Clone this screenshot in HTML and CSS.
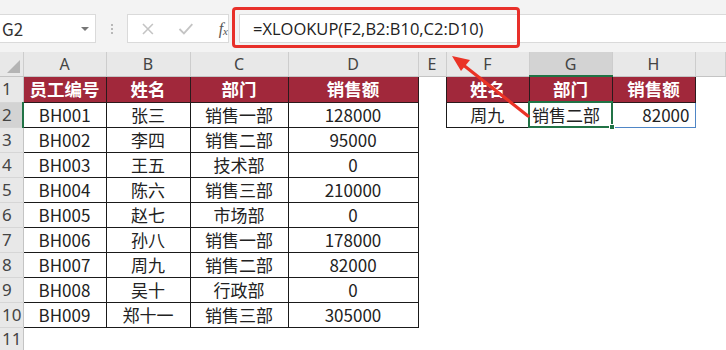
FILE: index.html
```html
<!DOCTYPE html>
<html lang="zh-CN">
<head>
  <meta charset="UTF-8" />
  <title>XLOOKUP</title>
  <link rel="stylesheet" href="styles.css">
</head>
<body>
  <div class="toolbar">
    <div class="namebox">
      <span>G2</span>
      <span class="caret"></span>
    </div>
    <div class="grip">
      <i></i><i></i><i></i>
    </div>
    <div class="fxbox">
      <svg class="ico" width="14" height="14" viewBox="0 0 14 14"><path d="M2 2 L12 12 M12 2 L2 12" stroke="#c4c4c4" stroke-width="1.6" fill="none"/></svg>
      <svg class="ico" width="16" height="14" viewBox="0 0 16 14"><path d="M1.5 7 L6 11.5 L14.5 2" stroke="#c4c4c4" stroke-width="1.8" fill="none"/></svg>
      <span class="fx">f<sub>x</sub></span>
    </div>
    <div class="formula">=XLOOKUP(F2,B2:B10,C2:D10)</div>
  </div>

  <table class="sheet">
    <colgroup>
      <col style="width:23px"><col style="width:83px"><col style="width:84px"><col style="width:98px">
      <col style="width:130px"><col style="width:28px"><col style="width:83px"><col style="width:83px">
      <col style="width:83px"><col>
    </colgroup>
    <tr class="colhead">
      <th class="corner"><span class="tri"></span></th>
      <th>A</th><th>B</th><th>C</th><th>D</th><th>E</th><th>F</th><th class="sel">G</th><th>H</th><th></th>
    </tr>
    <tr class="r1">
      <th class="rowhead">1</th>
      <td class="hd">员工编号</td><td class="hd">姓名</td><td class="hd">部门</td><td class="hd">销售额</td>
      <td></td>
      <td class="hd">姓名</td><td class="hd">部门</td><td class="hd">销售额</td><td></td>
    </tr>
    <tr>
      <th class="rowhead cur">2</th>
      <td class="c">BH001</td><td class="c">张三</td><td class="c">销售一部</td><td class="c">128000</td>
      <td></td>
      <td class="c">周九</td><td class="c active">销售二部<span class="handle"></span></td><td class="c num spill">82000</td><td></td>
    </tr>
    <tr>
      <th class="rowhead">3</th>
      <td class="c">BH002</td><td class="c">李四</td><td class="c">销售二部</td><td class="c">95000</td><td colspan="5"></td>
    </tr>
    <tr>
      <th class="rowhead">4</th>
      <td class="c">BH003</td><td class="c">王五</td><td class="c">技术部</td><td class="c">0</td><td colspan="5"></td>
    </tr>
    <tr>
      <th class="rowhead">5</th>
      <td class="c">BH004</td><td class="c">陈六</td><td class="c">销售三部</td><td class="c">210000</td><td colspan="5"></td>
    </tr>
    <tr>
      <th class="rowhead">6</th>
      <td class="c">BH005</td><td class="c">赵七</td><td class="c">市场部</td><td class="c">0</td><td colspan="5"></td>
    </tr>
    <tr>
      <th class="rowhead">7</th>
      <td class="c">BH006</td><td class="c">孙八</td><td class="c">销售一部</td><td class="c">178000</td><td colspan="5"></td>
    </tr>
    <tr>
      <th class="rowhead">8</th>
      <td class="c">BH007</td><td class="c">周九</td><td class="c">销售二部</td><td class="c">82000</td><td colspan="5"></td>
    </tr>
    <tr>
      <th class="rowhead">9</th>
      <td class="c">BH008</td><td class="c">吴十</td><td class="c">行政部</td><td class="c">0</td><td colspan="5"></td>
    </tr>
    <tr>
      <th class="rowhead">10</th>
      <td class="c">BH009</td><td class="c">郑十一</td><td class="c">销售三部</td><td class="c">305000</td><td colspan="5"></td>
    </tr>
    <tr class="last">
      <th class="rowhead">11</th>
      <td colspan="9"></td>
    </tr>
  </table>

  <!-- annotation: red box around the formula and arrow pointing at it -->
  <div class="mark"></div>
  <svg class="arrow" width="726" height="350" viewBox="0 0 726 350">
    <line x1="528" y1="116" x2="462" y2="64" stroke="#ea3326" stroke-width="3.2" stroke-linecap="round"/>
    <polygon points="452,56 470,60 461,71" fill="#ea3326"/>
  </svg>
</body>
</html>
```

FILE: styles.css
```css
* {
  box-sizing: border-box;
}
body {
  margin: 0;
  width: 726px;
  height: 350px;
  overflow: hidden;
  position: relative;
  background: #fff;
  font-family: "Noto Sans CJK SC", "Noto Sans", sans-serif;
  color: #222;
}

/* formula bar */
.toolbar {
  height: 52px;
  background: #f3f3f3;
  display: flex;
  align-items: flex-start;
  padding-top: 14px;
}
.namebox {
  width: 96px;
  height: 29px;
  background: #fff;
  border: 1px solid #dadada;
  border-left: none;
  display: flex;
  align-items: center;
  justify-content: space-between;
  padding: 0 6px 0 2px;
  font-size: 17px;
  color: #333;
}
.caret {
  width: 0;
  height: 0;
  border-left: 4px solid transparent;
  border-right: 4px solid transparent;
  border-top: 4px solid #777;
}
.grip {
  width: 31px;
  height: 29px;
  display: flex;
  flex-direction: column;
  align-items: center;
  justify-content: center;
  gap: 2px;
}
.grip i {
  width: 2px;
  height: 2px;
  background: #b8b8b8;
}
.fxbox {
  width: 102px;
  height: 29px;
  background: #fff;
  border: 1px solid #dadada;
  display: flex;
  align-items: center;
  padding-left: 13px;
}
.fxbox .ico {
  margin-right: 23px;
}
.fxbox .ico + .ico {
  margin-right: 25px;
}
.fx {
  font-family: "Liberation Serif", serif;
  font-style: italic;
  font-size: 16px;
  color: #555;
}
.fx sub {
  font-size: 11px;
  vertical-align: -1px;
}
.formula {
  flex: 1;
  margin-left: 10px;
  height: 29px;
  background: #fff;
  border: 1px solid #dadada;
  border-right: none;
  padding-left: 13px;
  font-family: "Open Sans", sans-serif;
  font-size: 16.5px;
  line-height: 27px;
  color: #222;
}

/* grid */
.sheet {
  border-collapse: collapse;
  table-layout: fixed;
  width: 726px;
}
.sheet th,
.sheet td {
  padding: 0;
  height: 25px;
  line-height: 22px;
  font-size: 17px;
  white-space: nowrap;
  overflow: visible;
}
.colhead th {
  height: 24px;
  background: #e8e8e8;
  border-right: 1px solid #cdcdcd;
  border-bottom: 1px solid #c4c4c4;
  font-family: "Noto Sans", sans-serif;
  font-weight: normal;
  font-size: 16px;
  color: #444;
}
.colhead th.sel {
  background: #d3d3d3;
  border-bottom: 2px solid #217346;
}
.corner {
  position: relative;
}
.tri {
  position: absolute;
  right: 3px;
  bottom: 3px;
  width: 0;
  height: 0;
  border-left: 13px solid transparent;
  border-bottom: 13px solid #b4b4b4;
}
.rowhead {
  background: #e8e8e8;
  border-right: 1px solid #c4c4c4;
  border-bottom: 1px solid #d6d6d6;
  font-family: "Noto Sans", sans-serif;
  font-weight: normal;
  font-size: 16px;
  color: #444;
  text-align: left;
  padding-left: 2px !important;
}
.rowhead.cur {
  background: #d3d3d3;
  border-right: 2px solid #217346;
}
.r1 th,
.r1 td {
  height: 26px;
}
.hd {
  background: #a1283b;
  color: #fff;
  font-weight: bold;
  font-size: 17.5px !important;
  text-align: center;
  border: 1px solid #2a1a1c;
}
.c {
  text-align: center;
  border: 1px solid #1a1a1a;
}
.num {
  text-align: right;
  padding-right: 5px !important;
}
.active {
  position: relative;
  text-align: left;
  padding-left: 2px !important;
  border: 2px solid #217346;
}
.handle {
  position: absolute;
  right: -4px;
  bottom: -4px;
  width: 6px;
  height: 6px;
  background: #217346;
  border: 1px solid #fff;
}
.spill {
  border-right: 1px solid #4f86c6;
  border-bottom: 1px solid #4f86c6;
}
.last th,
.last td {
  height: 23px;
}

.mark {
  position: absolute;
  left: 232px;
  top: 7px;
  width: 288px;
  height: 41px;
  border: 3px solid #e8302a;
  border-radius: 4px;
}
.arrow {
  position: absolute;
  left: 0;
  top: 0;
  pointer-events: none;
}
```
